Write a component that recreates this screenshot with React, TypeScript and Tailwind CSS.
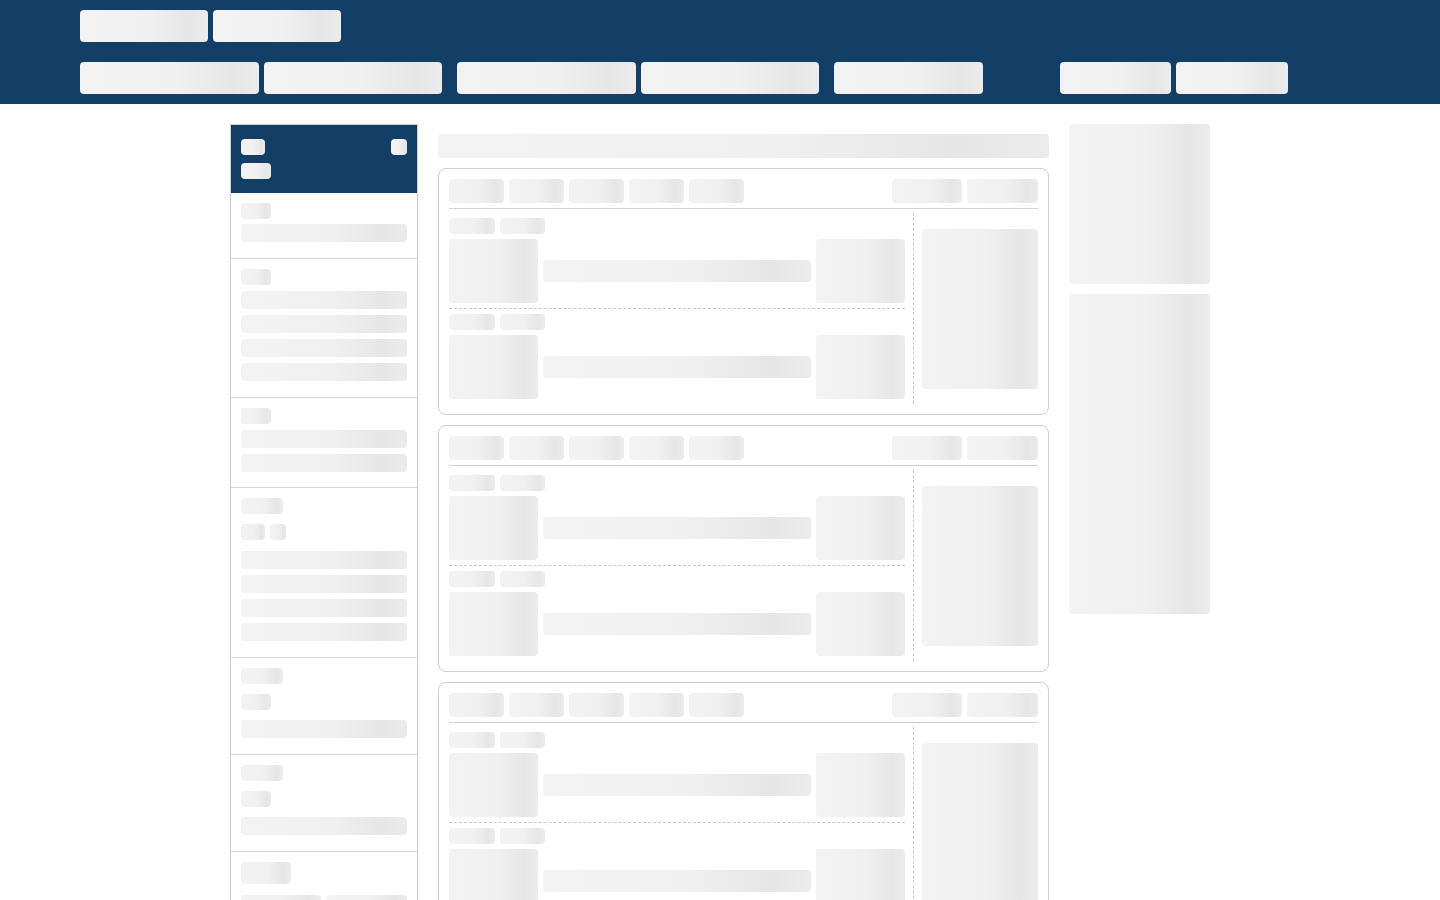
import React from "react";

const sk =
  "rounded-[4px] bg-[linear-gradient(90deg,#f3f3f3_0%,#f0f0f0_55%,#e6e6e6_85%,#ececec_100%)]";

function Sk({ className = "" }: { className?: string }) {
  return <div className={`${sk} ${className}`} />;
}

function Header() {
  return (
    <header className="bg-[#133e66] h-[104px]">
      <div className="w-[1280px] mx-auto pt-[10px] flex flex-col gap-[20px]">
        <div className="flex gap-[5px]">
          <Sk className="w-[128px] h-[32px]" />
          <Sk className="w-[128px] h-[32px]" />
        </div>
        <div className="flex">
          <Sk className="w-[179px] h-[32px]" />
          <Sk className="w-[178px] h-[32px] ml-[5px]" />
          <Sk className="w-[179px] h-[32px] ml-[15px]" />
          <Sk className="w-[178px] h-[32px] ml-[5px]" />
          <Sk className="w-[149px] h-[32px] ml-[15px]" />
          <Sk className="w-[111px] h-[32px] ml-[77px]" />
          <Sk className="w-[112px] h-[32px] ml-[5px]" />
        </div>
      </div>
    </header>
  );
}

function Bars({ n }: { n: number }) {
  return (
    <div className="flex flex-col gap-[6px]">
      {Array.from({ length: n }).map((_, i) => (
        <Sk key={i} className="h-[18px] w-full" />
      ))}
    </div>
  );
}

function Sidebar() {
  return (
    <aside className="w-[188px] shrink-0 border border-[#cdcdcd] self-start">
      <div className="bg-[#133e66] h-[68px] px-[10px] pt-[14px]">
        <div className="flex justify-between">
          <Sk className="w-[24px] h-[16px]" />
          <Sk className="w-[16px] h-[16px]" />
        </div>
        <Sk className="w-[30px] h-[16px] mt-[8px]" />
      </div>

      <div className="border-b border-[#d4d4d4] px-[10px] pt-[10px] pb-[16px]">
        <Sk className="w-[30px] h-[16px] mb-[5px]" />
        <Bars n={1} />
      </div>

      <div className="border-b border-[#d4d4d4] px-[10px] pt-[10px] pb-[16px]">
        <Sk className="w-[30px] h-[16px] mb-[6px]" />
        <Bars n={4} />
      </div>

      <div className="border-b border-[#d4d4d4] px-[10px] pt-[10px] pb-[15px]">
        <Sk className="w-[30px] h-[16px] mb-[6px]" />
        <Bars n={2} />
      </div>

      <div className="border-b border-[#d4d4d4] px-[10px] pt-[10px] pb-[16px]">
        <Sk className="w-[42px] h-[16px]" />
        <div className="flex gap-[5px] mt-[10px] mb-[11px]">
          <Sk className="w-[24px] h-[16px]" />
          <Sk className="w-[16px] h-[16px]" />
        </div>
        <Bars n={4} />
      </div>

      <div className="border-b border-[#d4d4d4] px-[10px] pt-[10px] pb-[16px]">
        <Sk className="w-[42px] h-[16px]" />
        <Sk className="w-[30px] h-[16px] mt-[10px] mb-[10px]" />
        <Bars n={1} />
      </div>

      <div className="border-b border-[#d4d4d4] px-[10px] pt-[10px] pb-[16px]">
        <Sk className="w-[42px] h-[16px]" />
        <Sk className="w-[30px] h-[16px] mt-[10px] mb-[10px]" />
        <Bars n={1} />
      </div>

      <div className="px-[10px] pt-[10px] pb-[16px]">
        <Sk className="w-[50px] h-[22px]" />
        <div className="flex gap-[6px] mt-[11px]">
          <Sk className="w-[80px] h-[18px]" />
          <Sk className="w-[80px] h-[18px]" />
        </div>
      </div>
    </aside>
  );
}

function Row({ last }: { last?: boolean }) {
  return (
    <div
      className={`pt-[5px] pb-[5px] ${
        last ? "" : "border-b border-dashed border-[#c9c9c9]"
      }`}
    >
      <div className="flex gap-[5px]">
        <Sk className="w-[46px] h-[16px]" />
        <Sk className="w-[45px] h-[16px]" />
      </div>
      <div className="flex items-center mt-[5px]">
        <Sk className="w-[89px] h-[64px]" />
        <Sk className="flex-1 h-[22px] mx-[5px]" />
        <Sk className="w-[89px] h-[64px]" />
      </div>
    </div>
  );
}

function Card() {
  return (
    <div className="border border-[#cfcfcf] rounded-[8px] px-[10px] pt-[10px] pb-[10px]">
      <div className="flex items-center pb-[5px] border-b border-[#d2d2d2]">
        <div className="flex gap-[5px]">
          <Sk className="w-[55px] h-[24px]" />
          <Sk className="w-[55px] h-[24px]" />
          <Sk className="w-[55px] h-[24px]" />
          <Sk className="w-[55px] h-[24px]" />
          <Sk className="w-[55px] h-[24px]" />
        </div>
        <div className="flex gap-[5px] ml-auto">
          <Sk className="w-[70px] h-[24px]" />
          <Sk className="w-[71px] h-[24px]" />
        </div>
      </div>
      <div className="flex mt-[4px]">
        <div className="w-[456px] shrink-0">
          <Row />
          <Row last />
        </div>
        <div className="ml-[8px] border-l border-dashed border-[#c9c9c9] flex-1 pl-[8px] pt-[16px]">
          <Sk className="w-full h-[160px]" />
        </div>
      </div>
    </div>
  );
}

export default function App() {
  return (
    <div className="min-h-screen bg-white font-['Liberation_Sans',sans-serif]">
      <Header />
      <main className="w-[980px] mx-auto pt-[20px] flex items-start">
        <Sidebar />
        <section className="w-[611px] ml-[20px] pt-[10px] flex flex-col gap-[10px]">
          <Sk className="w-full h-[24px]" />
          <Card />
          <Card />
          <Card />
        </section>
        <aside className="w-[141px] ml-[20px] flex flex-col gap-[10px]">
          <Sk className="w-full h-[160px]" />
          <Sk className="w-full h-[320px]" />
        </aside>
      </main>
    </div>
  );
}
